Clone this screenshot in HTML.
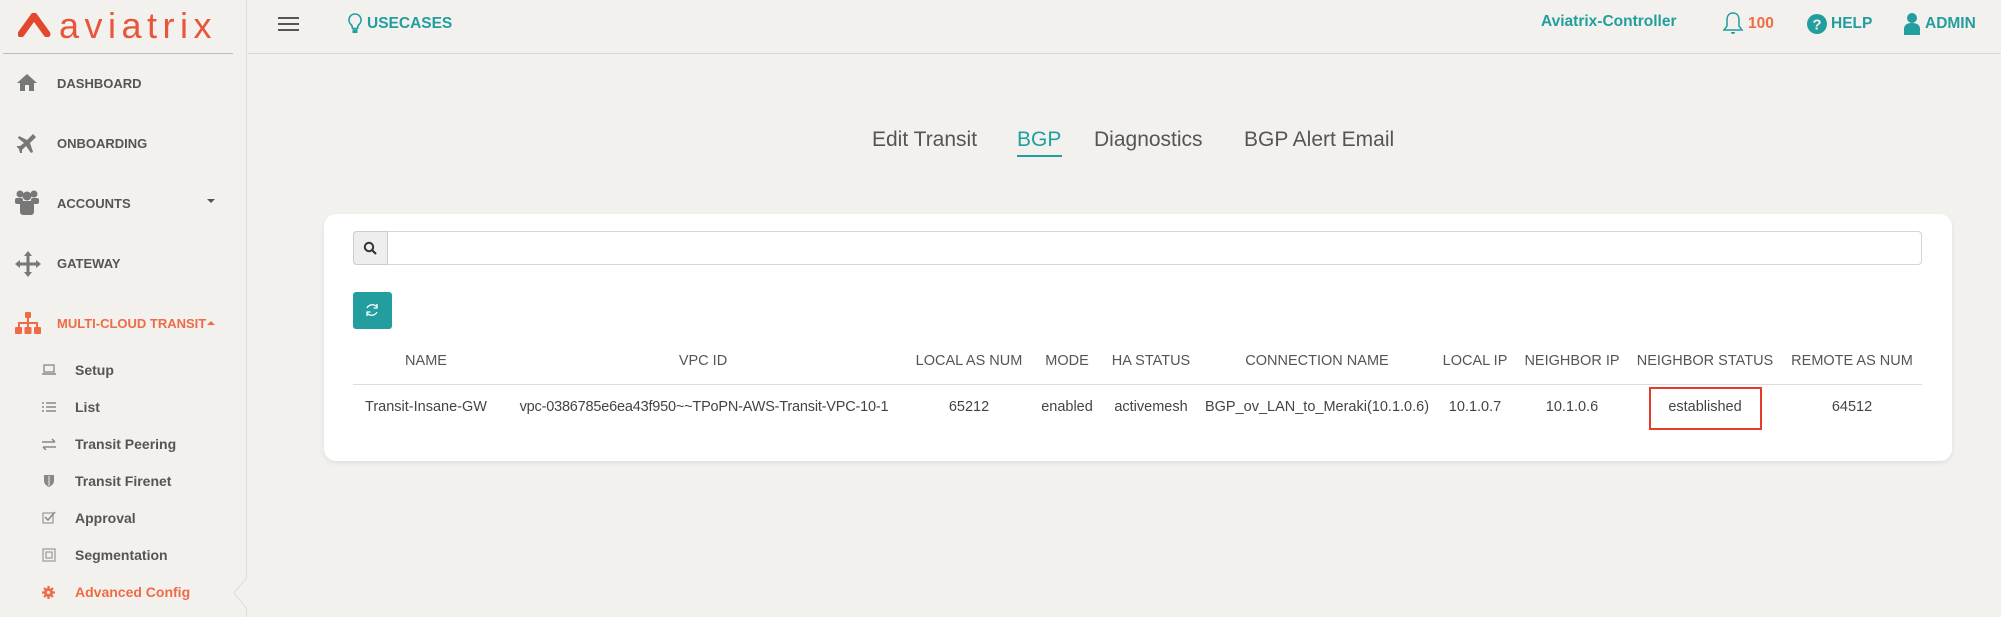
<!DOCTYPE html>
<html><head><meta charset="utf-8"><style>
*{margin:0;padding:0;box-sizing:border-box}
body{width:2001px;height:617px;background:#f2f1ee;font-family:"Liberation Sans",sans-serif;position:relative;overflow:hidden;color:#555}
.a{position:absolute;white-space:nowrap}
.side{position:absolute;left:0;top:0;width:247px;height:617px;border-right:1px solid #ddd;background:#f2f1ee}
.nav{font-weight:bold;font-size:13px;color:#555;left:57px}
.sub{font-weight:bold;font-size:14px;color:#555;left:75px}
.si{left:42px}
.th{font-size:14.5px;color:#555;transform:translateX(-50%);top:353px}
.td{font-size:14.5px;color:#444;transform:translateX(-50%);top:399px}
</style></head><body>
<div class="side"></div>
<svg class="a" style="left:233px;top:576px" width="16" height="34"><polygon points="15,0 1,17 15,34" fill="#f2f1ee" stroke="#ddd"/><rect x="14" y="-1" width="3" height="36" fill="#f2f1ee"/></svg>
<svg class="a" style="left:18px;top:13px" width="33" height="24"><path d="M3,21 L16,3 L29,21" fill="none" stroke="#e2482e" stroke-width="7" stroke-linejoin="round" stroke-linecap="round"/></svg>
<div class="a" style="left:59px;top:5px;font-size:36px;color:#e8553c;letter-spacing:5.5px">aviatrix</div>
<div class="a" style="left:3px;top:53px;width:230px;height:1px;background:#bbb"></div>
<div class="a" style="left:248px;top:53px;width:1753px;height:1px;background:#d8d8d5"></div>
<svg class="a" style="left:16px;top:73px" width="22" height="19"><path d="M11,1 L1,10 L4,10 L4,18 L9,18 L9,12 L13,12 L13,18 L18,18 L18,10 L21,10 Z" fill="#777"/></svg>
<div class="a nav" style="top:76px">DASHBOARD</div>
<svg class="a" style="left:16px;top:132px" width="22" height="22"><path d="M17,2 L20,5 L14,11 L17,20 L15,21 L10,14 L6,18 L6,21 L4,21 L3,17 L1,15 L1,14 L4,14 L8,11 L2,6 L3,4 L11,8 L17,2Z" fill="#777"/></svg>
<div class="a nav" style="top:136px">ONBOARDING</div>
<svg class="a" style="left:14px;top:190px" width="26" height="26"><circle cx="6" cy="4" r="3.5" fill="#777"/><circle cx="20" cy="4" r="3.5" fill="#777"/><circle cx="13" cy="6" r="4.5" fill="#777"/><rect x="1" y="8" width="8" height="6" rx="2" fill="#777"/><rect x="17" y="8" width="8" height="6" rx="2" fill="#777"/><rect x="6" y="11" width="14" height="14" rx="3" fill="#777"/></svg>
<div class="a nav" style="top:196px">ACCOUNTS</div>
<div class="a" style="left:207px;top:199px;border-left:4px solid transparent;border-right:4px solid transparent;border-top:4px solid #555"></div>
<svg class="a" style="left:15px;top:251px" width="26" height="26"><path d="M13,0 L17,5 L14.5,5 L14.5,11.5 L21,11.5 L21,9 L26,13 L21,17 L21,14.5 L14.5,14.5 L14.5,21 L17,21 L13,26 L9,21 L11.5,21 L11.5,14.5 L5,14.5 L5,17 L0,13 L5,9 L5,11.5 L11.5,11.5 L11.5,5 L9,5Z" fill="#777"/></svg>
<div class="a nav" style="top:256px">GATEWAY</div>
<svg class="a" style="left:15px;top:312px" width="26" height="22"><rect x="10" y="0" width="6" height="6" rx="1" fill="#ef6b45"/><path d="M13,6V10M4,16V11H22V16M13,10V16" stroke="#ef6b45" stroke-width="2" fill="none"/><rect x="0" y="15" width="7" height="7" rx="1" fill="#ef6b45"/><rect x="9.5" y="15" width="7" height="7" rx="1" fill="#ef6b45"/><rect x="19" y="15" width="7" height="7" rx="1" fill="#ef6b45"/></svg>
<div class="a nav" style="top:316px;color:#ef6b45">MULTI-CLOUD TRANSIT</div>
<div class="a" style="left:207px;top:321px;border-left:4px solid transparent;border-right:4px solid transparent;border-bottom:4px solid #ef6b45"></div>
<svg class="a si" style="top:364px" width="14" height="12"><rect x="2" y="1" width="10" height="7" fill="none" stroke="#888" stroke-width="1.3"/><path d="M0,10H14" stroke="#888" stroke-width="1.5"/></svg>
<div class="a sub" style="top:362px">Setup</div>
<svg class="a si" style="top:401px" width="14" height="12"><path d="M0,2H2M0,6H2M0,10H2M4,2H14M4,6H14M4,10H14" stroke="#888" stroke-width="1.5"/></svg>
<div class="a sub" style="top:399px">List</div>
<svg class="a si" style="top:438px" width="14" height="12"><path d="M0,4H13M10,1L13,4M14,9H1M4,12L1,9" stroke="#888" stroke-width="1.5" fill="none"/></svg>
<div class="a sub" style="top:436px">Transit Peering</div>
<svg class="a si" style="left:44px;top:474px" width="10" height="13"><path d="M0,1H10V7C10,10 7,12 5,13C3,12 0,10 0,7Z" fill="#888"/><path d="M5,2V12" stroke="#f2f1ee" stroke-width="1"/></svg>
<div class="a sub" style="top:473px">Transit Firenet</div>
<svg class="a si" style="top:511px" width="14" height="13"><rect x="1" y="2" width="10" height="10" fill="none" stroke="#999" stroke-width="1.2"/><path d="M3,6L6,9L13,1" stroke="#888" stroke-width="1.5" fill="none"/></svg>
<div class="a sub" style="top:510px">Approval</div>
<svg class="a si" style="top:548px" width="14" height="14"><rect x="1" y="1" width="12" height="12" fill="none" stroke="#999" stroke-width="1.2"/><rect x="4" y="4" width="6" height="6" fill="none" stroke="#999" stroke-width="1.2"/></svg>
<div class="a sub" style="top:547px">Segmentation</div>
<svg class="a si" style="top:586px" width="13" height="13"><circle cx="6.5" cy="6.5" r="4.5" fill="#ef6b45"/><path d="M6.5,0V13M0,6.5H13M2,2L11,11M11,2L2,11" stroke="#ef6b45" stroke-width="2.2"/><circle cx="6.5" cy="6.5" r="1.6" fill="#f2f1ee"/></svg>
<div class="a sub" style="top:584px;color:#ef6b45">Advanced Config</div>
<svg class="a" style="left:278px;top:16px" width="21" height="16"><path d="M0,2H21M0,8H21M0,14H21" stroke="#555" stroke-width="2"/></svg>
<svg class="a" style="left:348px;top:13px" width="14" height="24"><path d="M7,1a6,6 0 0 0 -4,10.5c1,1 1.5,2 1.5,4h5c0-2 .5-3 1.5-4A6,6 0 0 0 7,1Z" fill="none" stroke="#229e9e" stroke-width="1.6"/><rect x="4.5" y="16.5" width="5" height="3.5" fill="#229e9e"/></svg>
<div class="a" style="left:367px;top:15px;font-size:15.5px;font-weight:bold;color:#229e9e">USECASES</div>
<div class="a" style="left:1541px;top:13px;font-size:15.5px;font-weight:bold;color:#229e9e">Aviatrix-Controller</div>
<svg class="a" style="left:1722px;top:11px" width="22" height="25"><path d="M11,2c-4,0-6,3-6,7v6l-3,4h18l-3-4V9c0-4-2-7-6-7Z" fill="none" stroke="#229e9e" stroke-width="1.5"/><path d="M9,21a2,2 0 0 0 4,0" fill="#229e9e"/></svg>
<div class="a" style="left:1748px;top:15px;font-size:15.5px;font-weight:bold;color:#ef6b45">100</div>
<svg class="a" style="left:1806px;top:13px" width="22" height="22"><circle cx="11" cy="11" r="10" fill="#229e9e"/><text x="11" y="16.5" font-size="15" font-weight="bold" fill="#f2f1ee" text-anchor="middle" font-family="Liberation Sans">?</text></svg>
<div class="a" style="left:1831px;top:15px;font-size:15.5px;font-weight:bold;color:#229e9e">HELP</div>
<svg class="a" style="left:1903px;top:12px" width="18" height="23"><circle cx="9" cy="6" r="5" fill="#229e9e"/><path d="M1,23v-6c0-4 3-6 8-6s8,2 8,6v6Z" fill="#229e9e"/></svg>
<div class="a" style="left:1925px;top:15px;font-size:15.5px;font-weight:bold;color:#229e9e">ADMIN</div>
<div class="a" style="left:872px;top:128px;font-size:21px;color:#555">Edit Transit</div>
<div class="a" style="left:1017px;top:128px;font-size:21px;color:#229e9e">BGP</div>
<div class="a" style="left:1017px;top:155px;width:45px;height:2px;background:#229e9e"></div>
<div class="a" style="left:1094px;top:128px;font-size:21px;color:#555">Diagnostics</div>
<div class="a" style="left:1244px;top:128px;font-size:21px;color:#555">BGP Alert Email</div>
<div class="a" style="left:324px;top:214px;width:1628px;height:247px;background:#fff;border-radius:12px;box-shadow:0 2px 5px rgba(0,0,0,.08)"></div>
<div class="a" style="left:353px;top:231px;width:1569px;height:34px;border:1px solid #d5d5d5;border-radius:4px;background:#fff"></div>
<div class="a" style="left:353px;top:231px;width:35px;height:34px;border:1px solid #ccc;border-radius:4px 0 0 4px;background:#eee"></div>
<svg class="a" style="left:363px;top:241px" width="14" height="14"><circle cx="6" cy="6" r="4.2" fill="none" stroke="#333" stroke-width="2"/><path d="M9,9L13,13" stroke="#333" stroke-width="2.2"/></svg>
<div class="a" style="left:353px;top:292px;width:39px;height:37px;background:#229e9e;border-radius:3px"></div>
<svg class="a" style="left:364px;top:302px" width="16" height="16"><path d="M13,5A6,6 0 0 0 3,6M3,11A6,6 0 0 0 13,10" fill="none" stroke="#fff" stroke-width="1.3"/><path d="M13,2V6H9.5M3,14V10H6.5" fill="none" stroke="#fff" stroke-width="1.3"/></svg>
<div class="a th" style="left:426px">NAME</div>
<div class="a th" style="left:703px">VPC ID</div>
<div class="a th" style="left:969px">LOCAL AS NUM</div>
<div class="a th" style="left:1067px">MODE</div>
<div class="a th" style="left:1151px">HA STATUS</div>
<div class="a th" style="left:1317px">CONNECTION NAME</div>
<div class="a th" style="left:1475px">LOCAL IP</div>
<div class="a th" style="left:1572px">NEIGHBOR IP</div>
<div class="a th" style="left:1705px">NEIGHBOR STATUS</div>
<div class="a th" style="left:1852px">REMOTE AS NUM</div>
<div class="a" style="left:353px;top:384px;width:1569px;height:1px;background:#ddd"></div>
<div class="a td" style="left:426px">Transit-Insane-GW</div>
<div class="a td" style="left:704px;letter-spacing:-0.2px">vpc-0386785e6ea43f950~~TPoPN-AWS-Transit-VPC-10-1</div>
<div class="a td" style="left:969px">65212</div>
<div class="a td" style="left:1067px">enabled</div>
<div class="a td" style="left:1151px">activemesh</div>
<div class="a td" style="left:1317px">BGP_ov_LAN_to_Meraki(10.1.0.6)</div>
<div class="a td" style="left:1475px">10.1.0.7</div>
<div class="a td" style="left:1572px">10.1.0.6</div>
<div class="a td" style="left:1705px">established</div>
<div class="a td" style="left:1852px">64512</div>
<div class="a" style="left:1649px;top:387px;width:113px;height:43px;border:2px solid #e83a2c"></div>
</body></html>
